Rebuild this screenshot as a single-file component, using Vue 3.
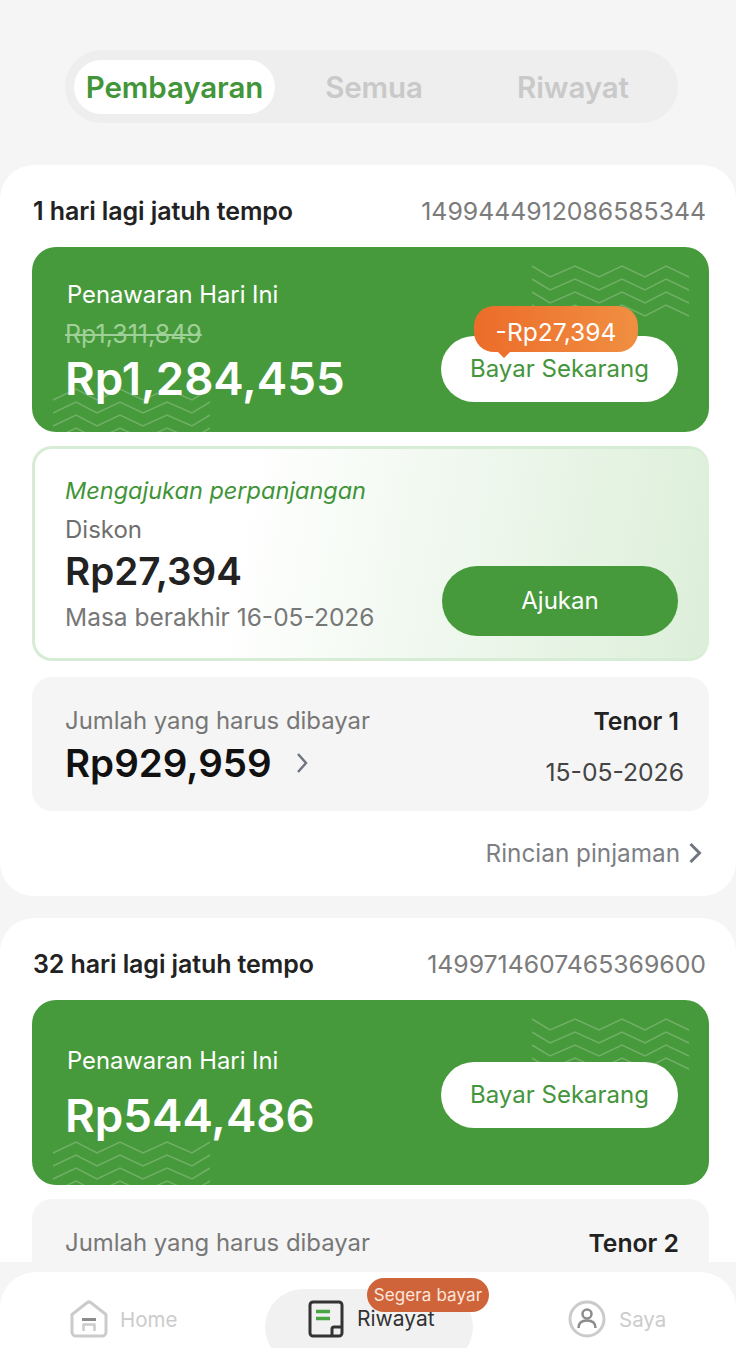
<template>
  <div class="page">
    <div class="tabs">
      <div
        v-for="(tab, i) in tabs"
        :key="tab"
        class="tab"
        :class="{ active: i === 0 }"
      >{{ tab }}</div>
    </div>

    <section v-for="loan in loans" :key="loan.id" class="card">
      <div class="card-head">
        <span class="due">{{ loan.due }}</span>
        <span class="loan-id">{{ loan.id }}</span>
      </div>

      <div class="offer">
        <svg class="wave wave-top" viewBox="0 0 158 52" fill="none">
          <path v-for="y in waveRows" :key="y" :d="wavePath(y)" />
        </svg>
        <svg class="wave wave-bottom" viewBox="0 0 158 52" fill="none">
          <path v-for="y in waveRows" :key="y" :d="wavePath(y)" />
        </svg>
        <div class="offer-left" :class="{ plain: !loan.oldPrice }">
          <div class="offer-title">Penawaran Hari Ini</div>
          <div v-if="loan.oldPrice" class="old-price">{{ loan.oldPrice }}</div>
          <div class="price">{{ loan.price }}</div>
        </div>
        <div class="pay-btn" :class="{ 'has-saving': loan.saving }">
          <span v-if="loan.saving" class="saving">{{ loan.saving }}</span>
          Bayar Sekarang
        </div>
      </div>

      <div v-if="loan.promo" class="promo">
        <div class="promo-left">
          <div class="promo-title">Mengajukan perpanjangan</div>
          <div class="promo-label">Diskon</div>
          <div class="promo-value">Rp27,394</div>
          <div class="promo-date">Masa berakhir 16-05-2026</div>
        </div>
        <div class="apply-btn">Ajukan</div>
      </div>

      <div class="bill">
        <div class="bill-left">
          <div class="bill-label">Jumlah yang harus dibayar</div>
          <div v-if="loan.amount" class="bill-amount">
            {{ loan.amount }}
            <svg class="bill-arrow" viewBox="0 0 12 22" fill="none">
              <path d="M2 2l8 9-8 9" />
            </svg>
          </div>
        </div>
        <div class="bill-right">
          <div class="tenor">{{ loan.tenor }}</div>
          <div v-if="loan.date" class="bill-date">{{ loan.date }}</div>
        </div>
      </div>

      <div v-if="loan.promo" class="detail-link">
        Rincian pinjaman
        <svg viewBox="0 0 14 22" fill="none"><path d="M2.5 2l9 9-9 9" /></svg>
      </div>
    </section>

    <div class="nav-wrap">
      <nav class="nav">
        <div class="nav-item">
          <svg class="nav-icon" viewBox="0 0 38 38" fill="none">
            <path class="line-gray" d="M2 14.500 17 2.800a3 3 0 0 1 4 0L36 14.500V32a4 4 0 0 1-4 4H6a4 4 0 0 1-4-4z" />
            <path class="line-dark" d="M12 19.500h14" />
            <path class="line-gray thin" d="M13.500 31v-6.500h11V31" />
          </svg>
          <span>Home</span>
        </div>
        <div class="nav-item current">
          <span class="nav-badge">Segera bayar</span>
          <svg class="nav-icon" viewBox="0 0 36 38" fill="none">
            <path class="line-ink" d="M5 2h26a3 3 0 0 1 3 3v28a3 3 0 0 1-3 3H5a3 3 0 0 1-3-3V5a3 3 0 0 1 3-3z" />
            <path class="line-green" d="M8 11.500h14M8 18.500h14" />
            <path class="line-ink" d="M24 35v-6a2 2 0 0 1 2-2h8" />
          </svg>
          <span>Riwayat</span>
        </div>
        <div class="nav-item">
          <svg class="nav-icon" viewBox="0 0 38 38" fill="none">
            <circle class="line-gray" cx="19" cy="19" r="17" />
            <circle class="line-dark thin" cx="19" cy="14" r="4.500" />
            <path class="line-dark thin" d="M10.500 28c0-5 3.500-7.500 8.500-7.500s8.500 2.500 8.500 7.500" />
          </svg>
          <span>Saya</span>
        </div>
      </nav>
    </div>
  </div>
</template>

<script setup>
const tabs = ['Pembayaran', 'Semua', 'Riwayat']

const loans = [
  {
    id: '1499444912086585344',
    due: '1 hari lagi jatuh tempo',
    oldPrice: 'Rp1,311,849',
    price: 'Rp1,284,455',
    saving: '-Rp27,394',
    promo: true,
    amount: 'Rp929,959',
    tenor: 'Tenor 1',
    date: '15-05-2026'
  },
  {
    id: '1499714607465369600',
    due: '32 hari lagi jatuh tempo',
    price: 'Rp544,486',
    tenor: 'Tenor 2'
  }
]

const waveRows = [1, 14, 27, 40]

// zigzag garis dekorasi
const wavePath = (y) => {
  const xs = [0, 18, 43, 67, 90, 113, 134, 157]
  return xs.map((x, i) => `${i ? 'L' : 'M'}${x} ${i % 2 ? y + 11 : y}`).join(' ')
}
</script>

<style>
html, body { margin: 0; background: #f5f5f5; }
</style>

<style scoped>
.page {
  position: relative;
  width: 736px;
  height: 1348px;
  overflow: hidden;
  background: #f5f5f5;
  padding-top: 50px;
  box-sizing: border-box;
  font-family: Inter, "Noto Sans", sans-serif;
  color: #1c1c1c;
}

.tabs {
  display: flex;
  align-items: center;
  width: 613px;
  height: 73px;
  margin: 0 0 42px 65px;
  padding: 0 9px;
  box-sizing: border-box;
  background: #eeeeee;
  border-radius: 37px;
}
.tab {
  flex: 1;
  height: 54px;
  line-height: 54px;
  padding-left: 3px;
  text-align: center;
  font-size: 29.500px;
  font-weight: 600;
  letter-spacing: -0.1px;
  color: #c9c9c9;
  border-radius: 27px;
}
.tab:last-child { padding-left: 7px; }
.tab.active { flex: none; width: 201px; padding-left: 0; background: #fff; color: #43953a; }

.card {
  background: #fff;
  border-radius: 34px;
  padding: 30px 27px 0 32px;
  margin-bottom: 22px;
  height: 731px;
  box-sizing: border-box;
}
.card-head {
  display: flex;
  justify-content: space-between;
  align-items: center;
  height: 32px;
  margin-bottom: 20px;
  padding-left: 1px;
  padding-right: 3px;
}
.due { font-size: 25px; font-weight: 600; color: #222; letter-spacing: -0.1px; }
.loan-id { font-size: 24.800px; color: #7b7b7b; }

.offer {
  position: relative;
  display: flex;
  justify-content: space-between;
  align-items: flex-start;
  height: 185px;
  padding: 0 31px 0 33px;
  box-sizing: border-box;
  background: #479a3b;
  border-radius: 24px;
  overflow: hidden;
  color: #fff;
}
.wave { position: absolute; width: 158px; height: 52px; }
.wave path { stroke: rgba(255, 255, 255, 0.22); stroke-width: 1.500; }
.wave-top { top: 18px; right: 19px; }
.wave-bottom { top: 141px; left: 20px; transform: scaleX(-1); }

.offer-left { position: relative; padding-top: 33px; }
.offer-left.plain { padding-top: 46px; }
.offer-title { font-size: 23.800px; line-height: 30px; padding-left: 2px; }
.old-price {
  font-size: 25px;
  line-height: 26px;
  margin-top: 11px;
  margin-bottom: -8px;
  color: #9fd098;
  text-decoration: line-through;
}
.price {
  font-size: 45.700px;
  font-weight: 600;
  line-height: 56px;
  margin-top: 12px;
}

.pay-btn {
  position: relative;
  width: 237px;
  height: 66px;
  margin-top: 62px;
  line-height: 66px;
  text-align: center;
  background: #fff;
  border-radius: 33px;
  font-size: 24px;
  color: #44953b;
}
.pay-btn.has-saving { margin-top: 89px; }
.saving {
  position: absolute;
  top: -30px;
  left: 33px;
  width: 164px;
  height: 46px;
  line-height: 52px;
  text-align: center;
  border-radius: 20px;
  background: linear-gradient(90deg, #ec6c2a, #f08f41);
  color: #fff;
  font-size: 24.600px;
}
.saving::after {
  content: "";
  position: absolute;
  left: 23px;
  bottom: -6px;
  border-left: 7px solid transparent;
  border-right: 7px solid transparent;
  border-top: 7px solid #ec6f2c;
}

.promo {
  display: flex;
  justify-content: space-between;
  align-items: flex-end;
  height: 215px;
  margin-top: 14px;
  padding: 0 31px 22px 30px;
  box-sizing: border-box;
  border: 3px solid #d7ecd4;
  border-right: 0;
  border-radius: 20px;
  background: linear-gradient(100deg, #ffffff 30%, #dcefd9 100%);
}
.promo-left { margin-bottom: 2px; }
.promo-title { font-size: 23.500px; font-style: italic; color: #3f9437; line-height: 30px; }
.promo-label { font-size: 24px; color: #6f6f6f; line-height: 30px; margin-top: 9px; }
.promo-value { font-size: 38.600px; font-weight: 600; line-height: 48px; margin-top: 2px; color: #222; }
.promo-date { font-size: 24.500px; color: #777; line-height: 32px; margin-top: 6px; margin-bottom: 1px; }
.apply-btn {
  width: 236px;
  height: 70px;
  line-height: 70px;
  text-align: center;
  border-radius: 36px;
  background: #479a3b;
  color: #fff;
  font-size: 24px;
}

.bill {
  display: flex;
  justify-content: space-between;
  height: 134px;
  margin-top: 14px;
  padding: 28px 25px 0 33px;
  box-sizing: border-box;
  background: #f5f5f5;
  border-radius: 20px;
}
.promo + .bill { margin-top: 16px; }
.bill-label { font-size: 23.900px; line-height: 32px; color: #777; }
.bill-amount {
  display: flex;
  align-items: center;
  gap: 24px;
  font-size: 38.500px;
  font-weight: 600;
  line-height: 48px;
  margin-top: 2px;
  color: #111;
}
.bill-arrow { width: 12px; height: 22px; }
.bill-arrow path { stroke: #6f7680; stroke-width: 2.500; }
.bill-right { text-align: right; }
.tenor { font-size: 24.700px; font-weight: 600; line-height: 32px; color: #222; padding-right: 5px; }
.bill-date { font-size: 24.700px; line-height: 32px; margin-top: 19px; color: #444; }

.detail-link {
  display: flex;
  justify-content: flex-end;
  align-items: center;
  gap: 8px;
  height: 32px;
  margin-top: 26px;
  padding-right: 7px;
  font-size: 24.300px;
  color: #7d7f83;
}
.detail-link svg { width: 14px; height: 22px; }
.detail-link path { stroke: #6f7680; stroke-width: 3; }

.nav-wrap {
  position: absolute;
  left: 0;
  right: 0;
  bottom: 0;
  padding-top: 10px;
  background: #f5f5f5;
}
.nav {
  position: relative;
  display: flex;
  height: 76px;
  background: #fff;
  border-radius: 36px 36px 0 0;
  overflow: hidden;
}
.nav-item {
  position: absolute;
  top: 28px;
  display: flex;
  align-items: center;
  gap: 12px;
  font-size: 20.500px;
  color: #cccccc;
}
.nav-item:nth-child(1) { left: 70px; }
.nav-item:nth-child(2) { left: 265px; top: 17px; width: 208px; height: 76px; padding: 11px 0 0 43px; box-sizing: border-box; align-items: flex-start; gap: 13px; }
.nav-item:nth-child(3) { left: 568px; gap: 13px; }
.nav-icon { width: 38px; height: 38px; flex: none; }
.current { background: #f1f1f1; border-radius: 38px; color: #333; font-size: 21px; }
.current .nav-icon { width: 36px; }
.current > span:last-child { line-height: 38px; }
.nav-badge {
  position: absolute;
  top: -11px;
  left: 102px;
  z-index: 1;
  width: 122px;
  height: 34px;
  line-height: 34px;
  text-align: center;
  border-radius: 17px;
  background: #cf643b;
  color: #fbe6dc;
  font-size: 17px;
  letter-spacing: 0.1px;
}
.line-gray { stroke: #cbcbcb; stroke-width: 3; stroke-linejoin: round; }
.line-dark { stroke: #8c8c8c; stroke-width: 3; }
.thin { stroke-width: 2.500; }
.line-ink { stroke: #333; stroke-width: 3; stroke-linejoin: round; }
.line-green { stroke: #4aa545; stroke-width: 3.500; }
</style>
